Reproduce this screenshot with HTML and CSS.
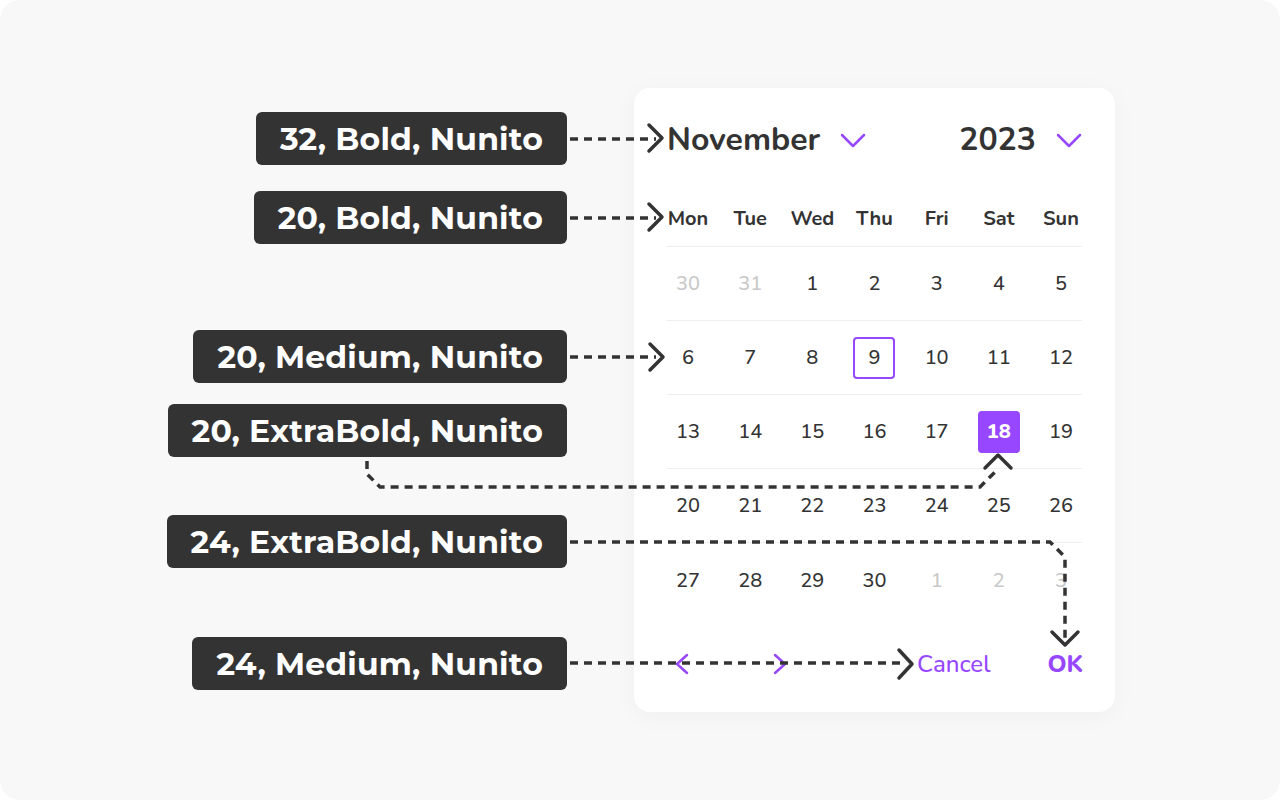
FILE: index.html
```html
<!DOCTYPE html>
<html lang="en">
<head>
<meta charset="utf-8">
<title>Date picker typography</title>
<link rel="stylesheet" href="styles.css">
</head>
<body>
<div class="stage">
  <div class="labels">
    <div class="tag t1">32, Bold, Nunito</div>
    <div class="tag t2">20, Bold, Nunito</div>
    <div class="tag t3">20, Medium, Nunito</div>
    <div class="tag t4">20, ExtraBold, Nunito</div>
    <div class="tag t5">24, ExtraBold, Nunito</div>
    <div class="tag t6">24, Medium, Nunito</div>
  </div>

  <div class="card">
    <div class="head">
      <div class="pick month">November
        <svg class="chev" width="26" height="16" viewBox="0 0 26 16"><path d="M2 3 L13 14 L24 3"/></svg>
      </div>
      <div class="pick year">2023
        <svg class="chev" width="26" height="16" viewBox="0 0 26 16"><path d="M2 3 L13 14 L24 3"/></svg>
      </div>
    </div>
    <div class="row wk">
      <span class="c">Mon</span><span class="c">Tue</span><span class="c">Wed</span><span class="c">Thu</span><span class="c">Fri</span><span class="c">Sat</span><span class="c">Sun</span>
    </div>
    <div class="row">
      <span class="c dim">30</span><span class="c dim">31</span><span class="c">1</span><span class="c">2</span><span class="c">3</span><span class="c">4</span><span class="c">5</span>
    </div>
    <div class="row">
      <span class="c">6</span><span class="c">7</span><span class="c">8</span><span class="c today">9</span><span class="c">10</span><span class="c">11</span><span class="c">12</span>
    </div>
    <div class="row">
      <span class="c">13</span><span class="c">14</span><span class="c">15</span><span class="c">16</span><span class="c">17</span><span class="c sel">18</span><span class="c">19</span>
    </div>
    <div class="row">
      <span class="c">20</span><span class="c">21</span><span class="c">22</span><span class="c">23</span><span class="c">24</span><span class="c">25</span><span class="c">26</span>
    </div>
    <div class="row last">
      <span class="c">27</span><span class="c">28</span><span class="c">29</span><span class="c">30</span><span class="c dim">1</span><span class="c dim">2</span><span class="c dim">3</span>
    </div>
    <div class="foot">
      <div class="nav">
        <svg class="arrow" width="16" height="22" viewBox="0 0 16 22"><path d="M13 2 L3 11 L13 20"/></svg>
        <svg class="arrow" width="16" height="22" viewBox="0 0 16 22"><path d="M3 2 L13 11 L3 20"/></svg>
      </div>
      <div class="actions">
        <span class="cancel">Cancel</span>
        <span class="ok">OK</span>
      </div>
    </div>
  </div>

  <svg class="notes" width="1280" height="800" viewBox="0 0 1280 800">
    <g class="dash">
      <path d="M570 139 H656"/>
      <path d="M570 218 H656"/>
      <path d="M570 357 H656"/>
      <path d="M367 461 V474 L380 487 H980 L995 472"/>
      <path d="M570 542 H1050 L1065 557 V640"/>
      <path d="M570 663 H906"/>
    </g>
    <g class="head-arrow">
      <path d="M649 125 L662 138 L649 151"/>
      <path d="M649 204 L662 217 L649 230"/>
      <path d="M650 344 L663 357 L650 370"/>
      <path d="M985 468 L998 455 L1011 468"/>
      <path d="M1052 632 L1065 645 L1078 632"/>
      <path d="M899 650 L912 664 L899 678"/>
    </g>
  </svg>
</div>
</body>
</html>
```
FILE: styles.css
```css
* { box-sizing: border-box; }
html, body {
  margin: 0;
  padding: 0;
  background: #ffffff;
}
.stage {
  position: relative;
  width: 1280px;
  height: 800px;
  background: #f8f8f8;
  border-radius: 20px;
  display: flex;
  align-items: flex-start;
  overflow: hidden;
}
.labels {
  width: 567px;
  display: flex;
  flex-direction: column;
  align-items: flex-end;
}
.tag {
  height: 53px;
  padding: 0 24px;
  border-radius: 6px;
  background: #333333;
  color: #ffffff;
  font-family: "Montserrat", "Inter", "Liberation Sans", sans-serif;
  font-weight: 700;
  font-size: 31.5px;
  letter-spacing: 0.2px;
  display: flex;
  align-items: center;
  white-space: nowrap;
}
.t1 { margin-top: 112px; }
.t2 { margin-top: 26px; }
.t3 { margin-top: 86px; }
.t4 { margin-top: 21px; }
.t5 { margin-top: 58px; }
.t6 { margin-top: 69px; }

.card {
  margin-left: 67px;
  margin-top: 88px;
  width: 481px;
  height: 624px;
  background: #ffffff;
  border-radius: 16px;
  box-shadow: 0 4px 24px rgba(0, 0, 0, 0.04);
  padding: 30px 33px 0;
  font-family: "Nunito", "Lato", "Liberation Sans", sans-serif;
  color: #333333;
}
.head {
  height: 44px;
  display: flex;
  justify-content: space-between;
  align-items: center;
}
.pick {
  display: flex;
  align-items: center;
  font-size: 32px;
  font-weight: 700;
  line-height: 44px;
}
.month .chev { margin-left: 20px; }
.year .chev { margin-left: 20px; }
.chev path, .arrow path {
  fill: none;
  stroke: #9747ff;
  stroke-width: 2.5;
  stroke-linecap: round;
  stroke-linejoin: round;
}
.row {
  height: 74px;
  display: flex;
  justify-content: space-between;
  align-items: center;
  border-bottom: 1px solid #eeeeee;
}
.row.wk {
  margin-top: 29px;
  height: 56px;
  font-weight: 700;
}
.row.last { border-bottom: none; }
.c {
  width: 42px;
  height: 42px;
  display: flex;
  align-items: center;
  justify-content: center;
  font-size: 20px;
  font-weight: 500;
  border-radius: 4px;
}
.wk .c { font-weight: 700; }
.c.dim { color: #c8c8c8; }
.c.today { border: 2px solid #9747ff; }
.c.sel {
  background: #9747ff;
  color: #ffffff;
  font-weight: 800;
}
.foot {
  height: 94px;
  display: flex;
  justify-content: space-between;
  align-items: center;
}
.nav {
  display: flex;
  align-items: center;
  gap: 82px;
  padding-left: 7px;
}
.arrow { display: block; }
.actions {
  display: flex;
  align-items: center;
  gap: 57px;
  margin-right: -1px;
  color: #9747ff;
  font-size: 24px;
}
.cancel { font-weight: 500; }
.ok { font-weight: 800; }

.notes {
  position: absolute;
  left: 0;
  top: 0;
  pointer-events: none;
}
.dash path {
  fill: none;
  stroke: #333333;
  stroke-width: 3.5;
  stroke-dasharray: 8 6;
}
.head-arrow path {
  fill: none;
  stroke: #333333;
  stroke-width: 3.5;
  stroke-linecap: round;
  stroke-linejoin: round;
}
```
